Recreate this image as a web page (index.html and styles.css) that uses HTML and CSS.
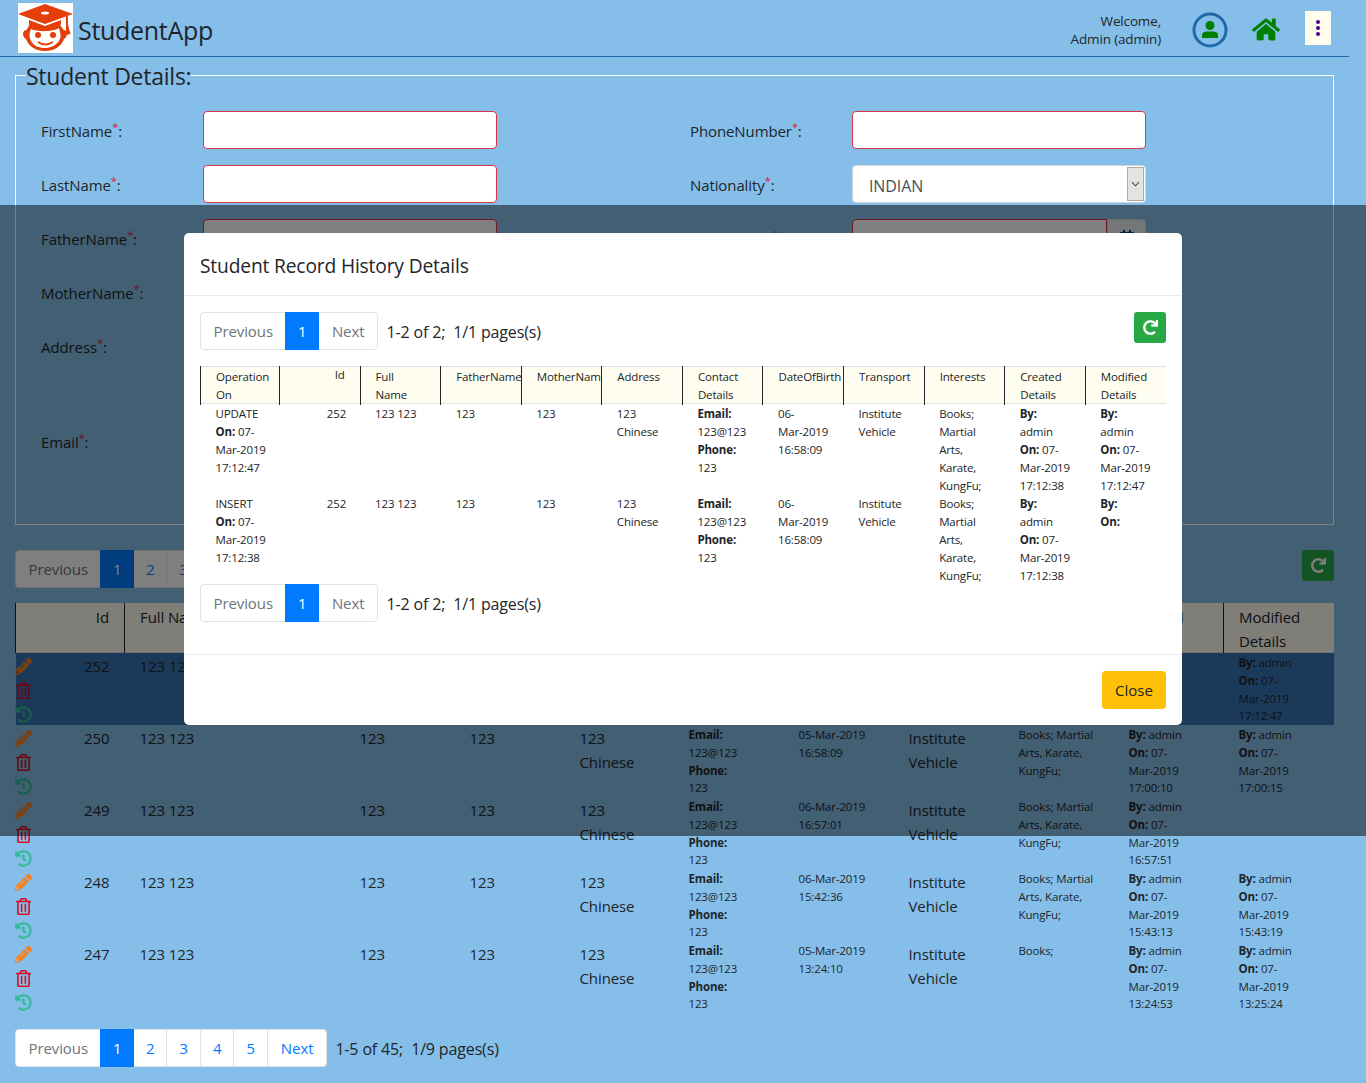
FILE: index.html
```html
<!DOCTYPE html>
<html lang="en">
<head>
<meta charset="utf-8">
<title>StudentApp</title>
<link rel="stylesheet" href="styles.css">
</head>
<body>
<svg class="defs" width="0" height="0">
  <symbol id="i-home" viewBox="0 0 576 512"><path d="M280.37 148.26L96 300.11V464a16 16 0 0 0 16 16l112.06-.29a16 16 0 0 0 15.92-16V368a16 16 0 0 1 16-16h64a16 16 0 0 1 16 16v95.64a16 16 0 0 0 16 16.05L464 480a16 16 0 0 0 16-16V300L295.67 148.26a12.19 12.19 0 0 0-15.3 0zM571.6 251.47L488 182.56V44.05a12 12 0 0 0-12-12h-56a12 12 0 0 0-12 12v72.61L318.47 43a48 48 0 0 0-61 0L4.34 251.47a12 12 0 0 0-1.6 16.9l25.5 31A12 12 0 0 0 45.15 301l235.22-193.74a12.19 12.19 0 0 1 15.3 0L530.9 301a12 12 0 0 0 16.9-1.6l25.5-31a12 12 0 0 0-1.7-16.93z"/></symbol>
  <symbol id="i-redo" viewBox="0 0 512 512"><path d="M500.33 0h-47.41a12 12 0 0 0-12 12.57l4 82.76A247.42 247.42 0 0 0 256 8C119.34 8 7.9 119.53 8 256.19 8.1 393.07 119.1 504 256 504a247.1 247.1 0 0 0 166.18-63.91 12 12 0 0 0 .48-17.43l-34-34a12 12 0 0 0-16.38-.55A176 176 0 1 1 402.1 157.8l-101.53-4.87a12 12 0 0 0-12.57 12v47.41a12 12 0 0 0 12 12h200.33a12 12 0 0 0 12-12V12a12 12 0 0 0-12-12z"/></symbol>
  <symbol id="i-history" viewBox="0 0 512 512"><path d="M504 255.531c.253 136.64-111.18 248.372-247.82 248.468-59.015.042-113.223-20.53-155.822-54.911-11.077-8.94-11.905-25.541-1.839-35.607l11.267-11.267c8.609-8.609 22.353-9.551 31.891-1.984C173.062 425.135 212.781 440 256 440c101.705 0 184-82.311 184-184 0-101.705-82.311-184-184-184-48.814 0-93.149 18.969-126.068 49.932l50.754 50.754c10.08 10.08 2.941 27.314-11.313 27.314H24c-8.837 0-16-7.163-16-16V38.627c0-14.254 17.234-21.393 27.314-11.314l49.372 49.372C129.209 34.136 189.552 8 256 8c136.81 0 247.747 110.78 248 247.531zm-180.912 78.784l9.823-12.63c8.138-10.463 6.253-25.542-4.21-33.679L288 256.349V152c0-13.255-10.745-24-24-24h-16c-13.255 0-24 10.745-24 24v135.651l65.409 50.874c10.463 8.137 25.541 6.253 33.679-4.21z"/></symbol>
  <symbol id="i-trash" viewBox="0 0 448 512"><path d="M268 416h24a12 12 0 0 0 12-12V188a12 12 0 0 0-12-12h-24a12 12 0 0 0-12 12v216a12 12 0 0 0 12 12zM432 80h-82.41l-34-56.7A48 48 0 0 0 274.41 0H173.59a48 48 0 0 0-41.16 23.3L98.41 80H16A16 16 0 0 0 0 96v16a16 16 0 0 0 16 16h16v336a48 48 0 0 0 48 48h288a48 48 0 0 0 48-48V128h16a16 16 0 0 0 16-16V96a16 16 0 0 0-16-16zM171.84 50.91A6 6 0 0 1 177 48h94a6 6 0 0 1 5.15 2.91L293.61 80H154.39zM368 464H80V128h288zm-212-48h24a12 12 0 0 0 12-12V188a12 12 0 0 0-12-12h-24a12 12 0 0 0-12 12v216a12 12 0 0 0 12 12z"/></symbol>
  <symbol id="i-pencil" viewBox="0 0 512 512"><path d="M497.9 142.1l-46.1 46.1c-4.7 4.7-12.3 4.7-17 0l-111-111c-4.7-4.7-4.7-12.3 0-17l46.1-46.1c18.7-18.7 49.1-18.7 67.9 0l60.1 60.1c18.8 18.7 18.8 49.1 0 67.9zM284.2 99.8L21.6 362.4.4 483.9c-2.9 16.4 11.4 30.6 27.8 27.8l121.5-21.3 262.6-262.6c4.7-4.7 4.7-12.3 0-17l-111-111c-4.8-4.7-12.4-4.7-17.1 0zM124.1 339.9c-5.5-5.5-5.5-14.3 0-19.8l154-154c5.5-5.5 14.3-5.5 19.8 0s5.5 14.3 0 19.8l-154 154c-5.5 5.5-14.3 5.5-19.8 0zM88 424h48v36.3l-64.5 11.3-31.1-31.1L51.7 376H88v48z"/></symbol>
</svg>
<div class="page">
  <header class="topbar">
    <div class="brand">
      <svg class="logo" viewBox="0 0 55 50" aria-hidden="true">
        <rect width="55" height="50" fill="#fff"/>
        <path d="M27 1 L55 11 L27 21 L0 11Z" fill="#e43f0a"/>
        <ellipse cx="27" cy="10" rx="4" ry="1.5" fill="#fff"/>
        <path d="M11 17 L27 23 L43 17 V21 C41 22 44 24 45.500 27 C50 27 50 34 46 36 C43 44 36 48 27 48 C18 48 11 44 8 36 C4 34 4 27 8.500 27 C10 24 12 22 11 21Z" fill="#e43f0a"/>
        <path d="M13 26 C19 29 35 29 41 25 C43 32 43 34 41 38 C37 43 32 45 27 45 C21 45 16 43 13 38 C11 34 11 30 13 26Z" fill="#fff"/>
        <circle cx="20" cy="32" r="3" fill="#e43f0a"/><circle cx="35" cy="32" r="3" fill="#e43f0a"/>
        <path d="M20 39 Q27 44 35 39" fill="none" stroke="#e43f0a" stroke-width="2"/>
        <path d="M50 13 V22 L52.500 31 L48 32 L48 22 V13Z" fill="#e43f0a"/>
      </svg>
      <span class="brand-name">StudentApp</span>
    </div>
    <div class="top-actions">
      <div class="welcome">Welcome,<br>Admin (admin)</div>
      <svg class="avatar" viewBox="0 0 36 36" aria-hidden="true">
        <circle cx="18" cy="18" r="16" fill="none" stroke="#1f69a8" stroke-width="3"/>
        <circle cx="18" cy="13.500" r="4.500" fill="#008000"/>
        <path d="M10 26 V23.500 C10 20.500 12 19.500 14.500 19.500 H21.500 C24 19.500 26 20.500 26 23.500 V26Z" fill="#008000"/>
      </svg>
      <svg class="home"><use href="#i-home"/></svg>
      <button class="kebab" type="button" aria-label="Menu"><i></i><i></i><i></i></button>
    </div>
  </header>

  <fieldset class="details">
    <legend>Student Details:</legend>
    <div class="form-grid">
      <label class="lbl">FirstName<sup>*</sup>:</label><input class="field">
      <label class="lbl lbl-r">PhoneNumber<sup>*</sup>:</label><input class="field">
      <label class="lbl">LastName<sup>*</sup>:</label><input class="field">
      <label class="lbl lbl-r">Nationality<sup>*</sup>:</label>
      <div class="select"><span>INDIAN</span><b><svg viewBox="0 0 10 6" width="9" height="6"><path d="M1 1l4 4 4-4" fill="none" stroke="#444" stroke-width="1.200"/></svg></b></div>
      <label class="lbl">FatherName<sup>*</sup>:</label><input class="field">
      <label class="lbl lbl-r">DateOfBirth<sup>*</sup>:</label>
      <div class="date"><input class="field field-date"><b><svg viewBox="0 0 14 16" width="14" height="16"><path d="M3 0h2v3H3zM9 0h2v3H9zM0 2h14v14H0z" fill="#004085"/></svg></b></div>
      <label class="lbl">MotherName<sup>*</sup>:</label><input class="field">
      <span></span><span></span>
      <label class="lbl">Address<sup>*</sup>:</label><textarea class="field area"></textarea>
      <span></span><span></span>
      <label class="lbl">Email<sup>*</sup>:</label><input class="field">
    </div>
  </fieldset>

  <div class="pager-row list-pager">
    <nav class="pager">
      <a class="off">Previous</a><a class="on">1</a><a>2</a><a>3</a><a>4</a><a>5</a><a>Next</a>
    </nav>
    <span class="pager-info">1-5 of 45;&nbsp; 1/9 pages(s)</span>
    <button class="refresh" type="button" aria-label="Refresh"><svg><use href="#i-redo"/></svg></button>
  </div>

  <table class="list">
    <colgroup><col class="c-id"><col class="c-name"><col class="c-w"><col class="c-w"><col class="c-id"><col class="c-w"><col class="c-w"><col class="c-w"><col class="c-w"><col class="c-w"><col class="c-last"></colgroup>
    <thead>
      <tr><th class="num">Id</th><th>Full Name</th><th>FatherName</th><th>MotherName</th><th>Address</th><th>Contact Details</th><th>DateOfBirth</th><th>Transport</th><th>Interests</th><th>Created Details</th><th>Modified Details</th></tr>
    </thead>
    <tbody>
      <tr class="sel">
        <td class="num"><div class="acts"><svg class="a-edit"><use href="#i-pencil"/></svg><svg class="a-del"><use href="#i-trash"/></svg><svg class="a-hist"><use href="#i-history"/></svg></div>252</td>
        <td>123 123</td><td>123</td><td>123</td><td>123<br>Chinese</td>
        <td class="sm"><b>Email:</b><br>123@123<br><b>Phone:</b><br>123</td><td class="sm">06-Mar-2019<br>16:58:09</td><td>Institute<br>Vehicle</td><td class="sm">Books; Martial Arts, Karate, KungFu;</td>
        <td class="sm"><b>By:</b> admin<br><b>On:</b> 07-<br>Mar-2019<br>17:12:38</td><td class="sm"><b>By:</b> admin<br><b>On:</b> 07-<br>Mar-2019<br>17:12:47</td>
      </tr>
      <tr>
        <td class="num"><div class="acts"><svg class="a-edit"><use href="#i-pencil"/></svg><svg class="a-del"><use href="#i-trash"/></svg><svg class="a-hist"><use href="#i-history"/></svg></div>250</td>
        <td>123 123</td><td>123</td><td>123</td><td>123<br>Chinese</td>
        <td class="sm"><b>Email:</b><br>123@123<br><b>Phone:</b><br>123</td><td class="sm">05-Mar-2019<br>16:58:09</td><td>Institute<br>Vehicle</td><td class="sm">Books; Martial Arts, Karate, KungFu;</td>
        <td class="sm"><b>By:</b> admin<br><b>On:</b> 07-<br>Mar-2019<br>17:00:10</td><td class="sm"><b>By:</b> admin<br><b>On:</b> 07-<br>Mar-2019<br>17:00:15</td>
      </tr>
      <tr>
        <td class="num"><div class="acts"><svg class="a-edit"><use href="#i-pencil"/></svg><svg class="a-del"><use href="#i-trash"/></svg><svg class="a-hist"><use href="#i-history"/></svg></div>249</td>
        <td>123 123</td><td>123</td><td>123</td><td>123<br>Chinese</td>
        <td class="sm"><b>Email:</b><br>123@123<br><b>Phone:</b><br>123</td><td class="sm">06-Mar-2019<br>16:57:01</td><td>Institute<br>Vehicle</td><td class="sm">Books; Martial Arts, Karate, KungFu;</td>
        <td class="sm"><b>By:</b> admin<br><b>On:</b> 07-<br>Mar-2019<br>16:57:51</td><td class="sm"></td>
      </tr>
      <tr>
        <td class="num"><div class="acts"><svg class="a-edit"><use href="#i-pencil"/></svg><svg class="a-del"><use href="#i-trash"/></svg><svg class="a-hist"><use href="#i-history"/></svg></div>248</td>
        <td>123 123</td><td>123</td><td>123</td><td>123<br>Chinese</td>
        <td class="sm"><b>Email:</b><br>123@123<br><b>Phone:</b><br>123</td><td class="sm">06-Mar-2019<br>15:42:36</td><td>Institute<br>Vehicle</td><td class="sm">Books; Martial Arts, Karate, KungFu;</td>
        <td class="sm"><b>By:</b> admin<br><b>On:</b> 07-<br>Mar-2019<br>15:43:13</td><td class="sm"><b>By:</b> admin<br><b>On:</b> 07-<br>Mar-2019<br>15:43:19</td>
      </tr>
      <tr>
        <td class="num"><div class="acts"><svg class="a-edit"><use href="#i-pencil"/></svg><svg class="a-del"><use href="#i-trash"/></svg><svg class="a-hist"><use href="#i-history"/></svg></div>247</td>
        <td>123 123</td><td>123</td><td>123</td><td>123<br>Chinese</td>
        <td class="sm"><b>Email:</b><br>123@123<br><b>Phone:</b><br>123</td><td class="sm">05-Mar-2019<br>13:24:10</td><td>Institute<br>Vehicle</td><td class="sm">Books;</td>
        <td class="sm"><b>By:</b> admin<br><b>On:</b> 07-<br>Mar-2019<br>13:24:53</td><td class="sm"><b>By:</b> admin<br><b>On:</b> 07-<br>Mar-2019<br>13:25:24</td>
      </tr>
    </tbody>
  </table>

  <div class="pager-row bottom-pager">
    <nav class="pager">
      <a class="off">Previous</a><a class="on">1</a><a>2</a><a>3</a><a>4</a><a>5</a><a>Next</a>
    </nav>
    <span class="pager-info">1-5 of 45;&nbsp; 1/9 pages(s)</span>
  </div>
</div>

<div class="backdrop"></div>
<section class="modal">
  <h2 class="modal-title">Student Record History Details</h2>
  <div class="modal-body">
    <div class="pager-row">
      <nav class="pager"><a class="off">Previous</a><a class="on">1</a><a class="off">Next</a></nav>
      <span class="pager-info">1-2 of 2;&nbsp; 1/1 pages(s)</span>
      <button class="refresh bright" type="button" aria-label="Refresh"><svg><use href="#i-redo"/></svg></button>
    </div>
    <table class="hist">
      <thead>
        <tr><th>Operation On</th><th class="num">Id</th><th>Full Name</th><th>FatherName</th><th>MotherName</th><th>Address</th><th>Contact Details</th><th>DateOfBirth</th><th>Transport</th><th>Interests</th><th>Created Details</th><th>Modified Details</th></tr>
      </thead>
      <tbody>
        <tr>
          <td>UPDATE<br><b>On:</b> 07-<br>Mar-2019<br>17:12:47</td><td class="num">252</td><td>123 123</td><td>123</td><td>123</td><td>123<br>Chinese</td>
          <td><b>Email:</b><br>123@123<br><b>Phone:</b><br>123</td><td>06-<br>Mar-2019<br>16:58:09</td><td>Institute<br>Vehicle</td><td>Books;<br>Martial<br>Arts,<br>Karate,<br>KungFu;</td>
          <td><b>By:</b><br>admin<br><b>On:</b> 07-<br>Mar-2019<br>17:12:38</td><td><b>By:</b><br>admin<br><b>On:</b> 07-<br>Mar-2019<br>17:12:47</td>
        </tr>
        <tr>
          <td>INSERT<br><b>On:</b> 07-<br>Mar-2019<br>17:12:38</td><td class="num">252</td><td>123 123</td><td>123</td><td>123</td><td>123<br>Chinese</td>
          <td><b>Email:</b><br>123@123<br><b>Phone:</b><br>123</td><td>06-<br>Mar-2019<br>16:58:09</td><td>Institute<br>Vehicle</td><td>Books;<br>Martial<br>Arts,<br>Karate,<br>KungFu;</td>
          <td><b>By:</b><br>admin<br><b>On:</b> 07-<br>Mar-2019<br>17:12:38</td><td><b>By:</b><br><b>On:</b></td>
        </tr>
      </tbody>
    </table>
    <div class="pager-row hist-pager">
      <nav class="pager"><a class="off">Previous</a><a class="on">1</a><a class="off">Next</a></nav>
      <span class="pager-info">1-2 of 2;&nbsp; 1/1 pages(s)</span>
    </div>
  </div>
  <footer class="modal-foot"><button class="close" type="button">Close</button></footer>
</section>
</body>
</html>
```
FILE: styles.css
```css
* { box-sizing: border-box; }
html, body { margin: 0; padding: 0; }
body {
  position: relative;
  height: 1083px;
  overflow: hidden;
  background: #85bfe9;
  color: #212529;
  font-family: "Open Sans", "Noto Sans", sans-serif;
  font-size: 15px;
  line-height: 24px;
  letter-spacing: -0.1px;
}
.defs { position: absolute; }
.page { width: 1349px; }

.topbar {
  display: flex;
  justify-content: space-between;
  height: 57px;
  padding: 3px 18px 0;
  border-bottom: 1px solid #1f69a8;
}
.brand { display: flex; align-items: flex-start; }
.logo { width: 55px; height: 50px; }
.brand-name { font-size: 25px; line-height: 54px; margin-left: 5px; letter-spacing: -0.3px; }
.top-actions { display: flex; align-items: flex-start; }
.welcome { font-size: 13.500px; line-height: 18px; text-align: right; margin-top: 9px; letter-spacing: -0.15px; }
.avatar { width: 36px; height: 36px; margin: 9px 0 0 31px; }
.home { width: 28px; height: 25px; margin: 14px 0 0 24px; fill: #008000; }
.kebab {
  display: flex; flex-direction: column; align-items: center; justify-content: center; gap: 2px;
  width: 26px; height: 34px; margin: 8px 0 0 25px; padding: 0;
  border: 0; background: #fffdf0;
}
.kebab i { width: 4px; height: 4px; border-radius: 50%; background: #4b0082; }

.details {
  width: 1319px; height: 463px;
  margin: 5px 0 0 15px;
  padding: 0 0 0 25px;
  border: 1px solid #fff;
  min-width: 0;
}
.details legend { position: relative; top: 1px; font-size: 23px; line-height: 26px; padding: 0; margin-left: -15px; letter-spacing: -0.25px; }
.form-grid {
  display: grid;
  grid-template-columns: 162px 294px 355px 294px;
  grid-template-rows: 38px 38px 38px 38px 79px 38px;
  row-gap: 16px;
  margin-top: 23px;
  align-items: start;
}
.lbl { line-height: 40px; }
.lbl-r { margin-left: 193px; }
.lbl sup { color: #dc143c; font-size: 11px; line-height: 0; }
.field {
  display: block; width: 294px; height: 38px;
  border: 1px solid #dc3545; border-radius: 4px; background: #fff;
}
.area { resize: none; height: 79px; }
.select {
  display: flex; justify-content: space-between; align-items: stretch;
  width: 294px; height: 38px; padding: 1px 1px 1px 16px;
  border: 1px solid #ced4da; border-radius: 4px; background: #fff;
}
.select span { line-height: 38px; font-size: 16px; color: #495057; }
.select b { display: flex; align-items: center; justify-content: center; width: 17px; background: #e3e3e3; border: 1px solid #a9a9a9; }
.date { display: flex; width: 294px; height: 38px; }
.field-date { width: 255px; border-radius: 4px 0 0 4px; }
.date b { flex: 1; display: flex; align-items: center; justify-content: center; background: #e9ecef; border: 1px solid #ced4da; border-radius: 0 4px 4px 0; }

.pager-row { display: flex; align-items: flex-start; height: 38px; }
.pager { display: flex; height: 38px; background: #fff; border: 1px solid #dee2e6; border-radius: 4px; }
.pager a { padding: 0 12px; line-height: 37px; color: #007bff; border-left: 1px solid #dee2e6; font-size: 15px; }
.pager a:first-child { border-left: 0; padding: 0 12.500px; }
.pager a:last-child { padding: 0 13px; }
.pager a.off { color: #6c757d; }
.pager a.on { color: #fff; background: #007bff; border-left: 0; margin-top: -1px; margin-bottom: -1px; line-height: 39px; padding: 0 12.500px; }
.pager a.on + a { border-left: 0; }
.pager-info { margin-left: 8px; line-height: 41px; font-size: 16px; letter-spacing: -0.15px; }
.refresh {
  margin-left: auto; width: 32px; height: 31px; padding: 0;
  display: flex; align-items: center; justify-content: center;
  border: 0; border-radius: 3px; background: #28a745; fill: #fff;
}
.refresh svg { width: 15px; height: 15px; stroke: #fff; stroke-width: 12px; }
.list-pager { margin: 25px 15px 0; }
.bottom-pager { margin: 16px 15px 0; }
.hist-pager { margin-top: -1px; }

.list { width: 1318px; margin: 15px 0 0 15px; border-collapse: collapse; table-layout: fixed; }
.c-id { width: 109px; }
.c-name { width: 220px; }
.c-w { width: 110px; }
.c-last { width: 110px; }
.list th {
  height: 50px; padding: 2px 15px 0; vertical-align: top; text-align: left; font-weight: 400;
  background: #fffdf0; border-left: 1px solid #212529; box-shadow: inset 0 -1px #dee2e6; overflow: hidden; font-size: 15px;
}
.list td { height: 72px; padding: 1px 15px 0; vertical-align: top; font-size: 15px; position: relative; }
.list td.sm { font-size: 11.500px; line-height: 17.750px; letter-spacing: -0.15px; }
.list .num { text-align: right; }
.list .sel td { background: #3674b5; }
.acts { position: absolute; left: -1px; top: 5px; width: 17px; display: flex; flex-direction: column; }
.acts svg { width: 17px; height: 17px; margin-bottom: 7px; }
.a-edit { fill: #fd7e14; }
.a-del { fill: #dc0a1e; }
.a-hist { fill: #33bb99; }

.backdrop { position: absolute; left: 0; top: 205px; width: 1366px; height: 631px; background: rgba(0, 0, 0, .5); }
.modal { position: absolute; left: 184px; top: 233px; width: 998px; height: 492px; background: #fff; border-radius: 5px; display: flex; flex-direction: column; }
.modal-title { margin: 0; height: 63px; padding: 0 16px; font-size: 19.200px; font-weight: 400; line-height: 66px; border-bottom: 1px solid #e9ecef; letter-spacing: -0.15px; }
.modal-body { flex: 1; padding: 16px 16px 0; }
.hist { width: 966px; margin-top: 16px; border-collapse: collapse; table-layout: fixed; font-size: 11.500px; line-height: 18px; letter-spacing: -0.15px; }
.hist th {
  height: 39px; padding: 2px 15px 0; text-align: left; vertical-align: top; font-weight: 400;
  background: #fffdf0; border-left: 1px solid #212529; box-shadow: inset 0 1px #dee2e6, inset 0 -1px #fff, inset 0 -2px #dee2e6; overflow: hidden;
}
.hist th:first-child { width: 79px; }
.hist td { padding: 0 0 0 15px; vertical-align: top; height: 90px; }
.hist .num { text-align: right; padding: 0 14px 0 0; }
.hist th.num { padding-right: 15px; }
.modal-foot { height: 71px; padding: 16px; display: flex; justify-content: flex-end; border-top: 1px solid #e9ecef; }
.close { width: 64px; height: 38px; padding: 0; border: 0; border-radius: 4px; background: #ffc107; color: #212529; font: inherit; }
```
